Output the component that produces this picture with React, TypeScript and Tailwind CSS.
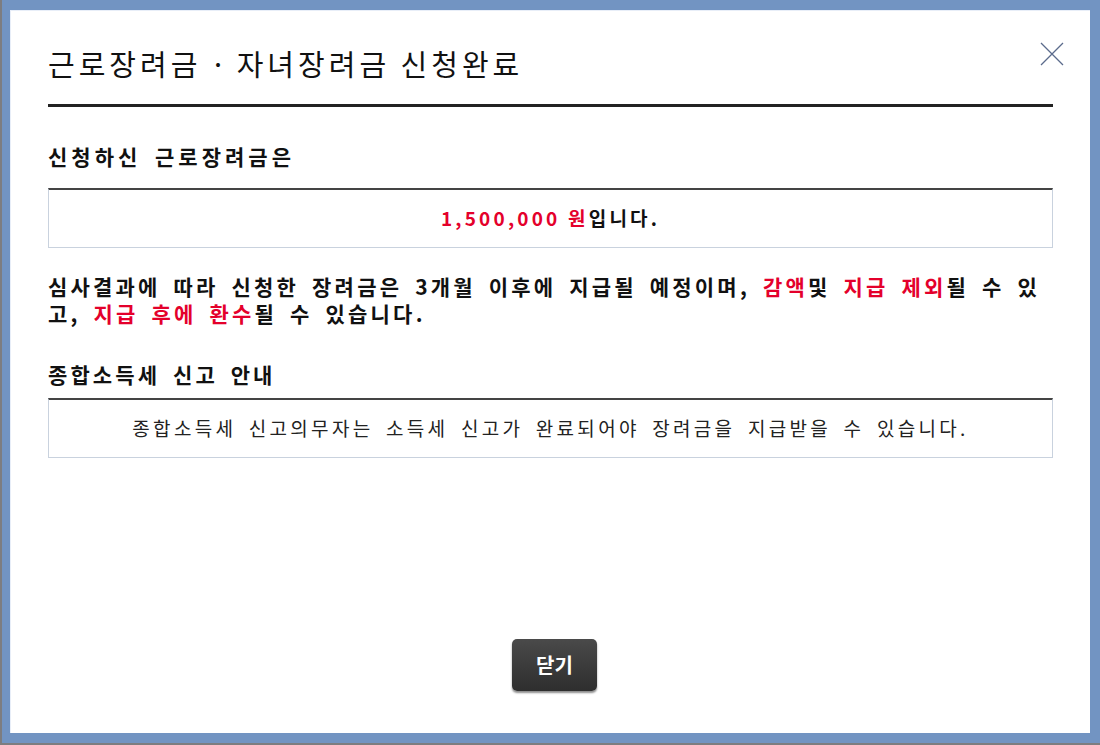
const font = { fontFamily: '"Noto Sans CJK KR", "Noto Sans", sans-serif' };

function Red({ children }: { children: React.ReactNode }) {
  return <span className="text-[#e4002b]">{children}</span>;
}

export default function App() {
  return (
    <div
      className="flex h-[745px] w-[1100px] flex-col border-b-2 border-l-2 border-[#7d7d80] bg-[#7294c2] pb-[10px] pl-[8px] pr-[10px] pt-[10px]"
      style={font}
    >
      <div className="relative flex flex-1 flex-col border-l border-t border-[#e8eef8] bg-white px-[37px]">
        <button className="absolute right-[26px] top-[31px]" aria-label="close">
          <svg width="24" height="24" viewBox="0 0 24 24" fill="none" stroke="#5b6b8c" strokeWidth="1.3">
            <path d="M1 1 L23 23 M23 1 L1 23" />
          </svg>
        </button>

        <div className="flex h-[96px] items-end border-b-[3px] border-[#222] pb-[26px]">
          <h1 className="text-[29px] leading-none tracking-[4px] text-[#111]">
            근로장려금<span className="tracking-[2px]"> · </span>자녀장려금 신청완료
          </h1>
        </div>

        <h2 className="mt-[39px] text-[21px] font-bold leading-none tracking-[4px] text-[#111] [word-spacing:5px]">
          신청하신 근로장려금은
        </h2>
        <div className="mt-[21px] flex h-[60px] items-center justify-center border border-t-2 border-[#c9d2de] border-t-[#444]">
          <p className="text-[19px] font-bold tracking-[3.2px] text-[#111]">
            <Red>1,500,000 원</Red>입니다.
          </p>
        </div>

        <p className="mt-[25px] break-all text-[21px] font-bold leading-[27px] tracking-[3.2px] text-[#111] [word-spacing:5px]">
          심사결과에 따라 신청한 장려금은 3개월 이후에 지급될 예정이며, <Red>감액</Red>및 <Red>지급 제외</Red>될 수 있고, <Red>지급 후에 환수</Red>될 수 있습니다.
        </p>

        <h2 className="mt-[37px] text-[21px] font-bold leading-none tracking-[3.1px] text-[#111] [word-spacing:5px]">
          종합소득세 신고 안내
        </h2>
        <div className="mt-[13px] flex h-[60px] items-center justify-center border border-t-2 border-[#c9d2de] border-t-[#444]">
          <p className="text-[19px] tracking-[3.3px] text-[#222] [word-spacing:5px]">
            종합소득세 신고의무자는 소득세 신고가 완료되어야 장려금을 지급받을 수 있습니다.
          </p>
        </div>

        <div className="mt-auto flex justify-center pb-[42px] pl-[8px]">
          <button className="h-[52px] w-[85px] rounded-[5px] bg-gradient-to-b from-[#4a4a4a] to-[#2e2e2e] text-[20px] font-bold text-white shadow-[0_2px_2px_rgba(0,0,0,0.45)]">
            닫기
          </button>
        </div>
      </div>
    </div>
  );
}
